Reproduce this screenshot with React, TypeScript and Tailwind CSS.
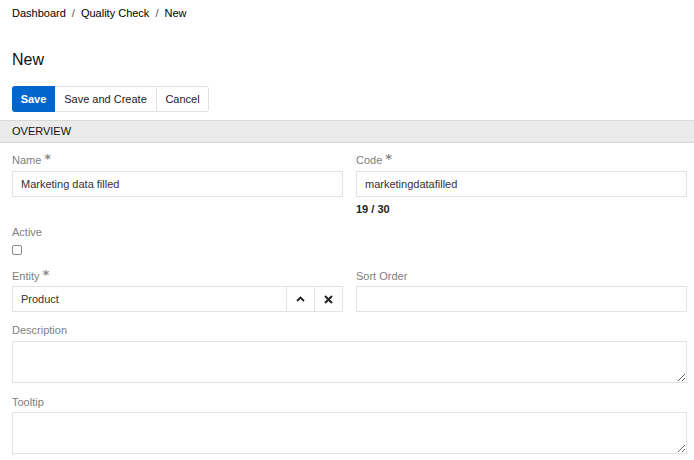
import React from "react";

const Star = () => (
  <span className="ml-[3px] self-start font-['DejaVu_Sans',sans-serif] text-[13px] font-bold leading-[12px] text-[#8a8a8a]">
    *
  </span>
);

const Label = ({ children, required }: { children: React.ReactNode; required?: boolean }) => (
  <div className="flex h-[14px] items-center text-[11px] text-[#808080]">
    {children}
    {required && <Star />}
  </div>
);

const TextInput = ({ value }: { value?: string }) => (
  <input
    readOnly
    value={value ?? ""}
    className="block h-[26px] w-full border border-[#e3e3e3] bg-white px-[8px] text-[11px] text-[#333] outline-none"
  />
);

const App: React.FC = () => {
  return (
    <div className="min-h-[460px] bg-white font-['Liberation_Sans',Arial,sans-serif] text-[#222]">
      {/* Breadcrumb */}
      <div className="flex h-[26px] items-center gap-[6px] px-3 text-[11px] text-[#000]">
        <span>Dashboard</span>
        <span className="text-[#555]">/</span>
        <span>Quality Check</span>
        <span className="text-[#555]">/</span>
        <span>New</span>
      </div>

      <h1 className="mt-[24px] px-3 text-[16px] leading-[20px] text-[#111]">New</h1>

      {/* Actions */}
      <div className="mt-[16px] flex px-3">
        <button className="h-[26px] w-[43px] rounded-l-[3px] bg-[#0066cc] text-[11px] font-bold text-white">
          Save
        </button>
        <button className="h-[26px] w-[101px] border-y border-[#e2e2e2] bg-white text-[11px] text-[#222]">
          Save and Create
        </button>
        <button className="h-[26px] w-[53px] rounded-r-[3px] border border-[#e2e2e2] bg-white text-[11px] text-[#222]">
          Cancel
        </button>
      </div>

      {/* Section header */}
      <div className="mt-[8px] flex h-[23px] items-center border-y border-[#d9d9d9] bg-[#ebebeb] px-3 text-[11px] text-[#111]">
        OVERVIEW
      </div>

      <div className="pl-3 pr-[7px]">
        {/* Name / Code */}
        <div className="mt-[10px] grid grid-cols-2 gap-x-[13px]">
          <div>
            <Label required>Name</Label>
            <div className="mt-[4px]">
              <TextInput value="Marketing data filled" />
            </div>
          </div>
          <div>
            <Label required>Code</Label>
            <div className="mt-[4px]">
              <TextInput value="marketingdatafilled" />
            </div>
            <div className="mt-[5px] h-[14px] text-[11px] font-bold leading-[14px] text-[#222]">19 / 30</div>
          </div>
        </div>

        {/* Active */}
        <div className="mt-[9px]">
          <Label>Active</Label>
          <div className="mt-[6px] h-[10px] w-[10px] rounded-[2px] border border-[#8a8a8a] bg-white" />
        </div>

        {/* Entity / Sort Order */}
        <div className="mt-[14px] grid grid-cols-2 gap-x-[13px]">
          <div>
            <Label required>Entity</Label>
            <div className="mt-[3px] flex h-[26px] border border-[#e3e3e3] bg-white">
              <div className="flex flex-1 items-center px-[8px] text-[11px] text-[#333]">Product</div>
              <div className="flex w-[28px] items-center justify-center border-l border-[#e3e3e3]">
                <svg width="9" height="6" viewBox="0 0 9 6">
                  <path d="M1 5 L4.5 1.5 L8 5" fill="none" stroke="#222" strokeWidth="1.8" />
                </svg>
              </div>
              <div className="flex w-[28px] items-center justify-center border-l border-[#e3e3e3]">
                <svg width="9" height="9" viewBox="0 0 9 9">
                  <path d="M1 1 L8 8 M8 1 L1 8" fill="none" stroke="#222" strokeWidth="2" />
                </svg>
              </div>
            </div>
          </div>
          <div>
            <Label>Sort Order</Label>
            <div className="mt-[3px]">
              <TextInput />
            </div>
          </div>
        </div>

        {/* Description */}
        <div className="mt-[11px]">
          <Label>Description</Label>
          <textarea
            readOnly
            className="mt-[4px] block h-[42px] w-full border border-[#e3e3e3] bg-white px-[8px] text-[11px] outline-none"
          />
        </div>

        {/* Tooltip */}
        <div className="mt-[12px]">
          <Label>Tooltip</Label>
          <textarea
            readOnly
            className="mt-[3px] block h-[42px] w-full border border-[#e3e3e3] bg-white px-[8px] text-[11px] outline-none"
          />
        </div>
      </div>
    </div>
  );
};

export default App;
